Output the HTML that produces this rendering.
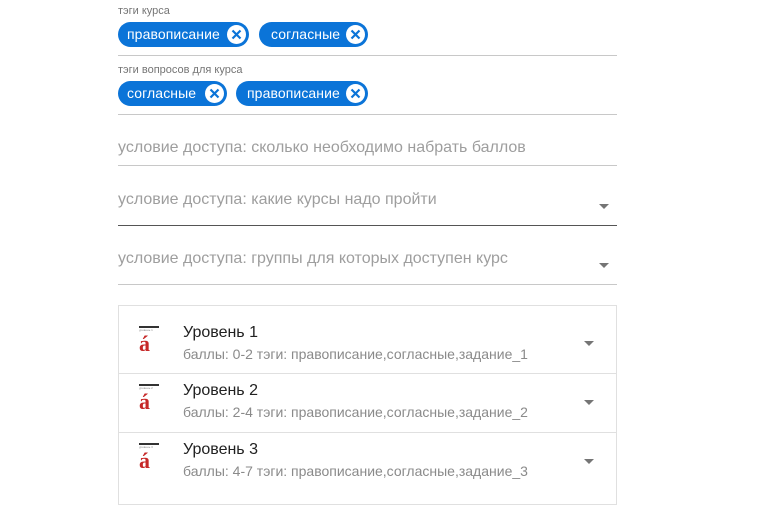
<!DOCTYPE html>
<html><head><meta charset="utf-8"><style>
body{margin:0;width:767px;height:468px;overflow:hidden;background:#fff;font-family:"Liberation Sans",Arial,sans-serif;position:relative}
.a{position:absolute}
.lbl{font-size:11px;color:#757575;left:118px}
.chip{position:absolute;height:25px;border-radius:13px;background:#0b74d8;color:#fff;font-size:14px;line-height:25px;padding-left:9px;box-sizing:border-box;letter-spacing:0.1px}
.x{position:absolute;right:3px;top:3px;width:19px;height:19px;border-radius:50%;background:#fff}
.line{position:absolute;left:118px;width:499px;height:1px;background:#c8c8c8}
.ph{position:absolute;left:118px;font-size:16px;color:#9e9e9e}
.arr{position:absolute;width:0;height:0;border-left:5px solid transparent;border-right:5px solid transparent;border-top:5px solid #757575}
.card{position:absolute;left:118px;top:305px;width:499px;height:200px;border:1px solid #e0e0e0;box-sizing:border-box}
.row{position:absolute;left:0;width:497px;border-bottom:1px solid #e0e0e0}
.t{position:absolute;left:64px;font-size:16px;color:#212121}
.s{position:absolute;left:64px;font-size:14px;color:#8a8a8a}
.ic{position:absolute;left:20px;width:20px}
</style></head><body>
<div class="a lbl" style="top:5px">тэги курса</div>
<div class="chip" style="left:118px;top:22px;width:131px">правописание<svg class="x" viewBox="0 0 19 19"><path d="M5.5 5.5L13.5 13.5M13.5 5.5L5.5 13.5" stroke="#0b74d8" stroke-width="2.2"/></svg></div>
<div class="chip" style="left:259px;top:22px;width:109px;padding-left:12px">согласные<svg class="x" viewBox="0 0 19 19"><path d="M5.5 5.5L13.5 13.5M13.5 5.5L5.5 13.5" stroke="#0b74d8" stroke-width="2.2"/></svg></div>
<div class="line" style="top:55px"></div>
<div class="a lbl" style="top:64px">тэги вопросов для курса</div>
<div class="chip" style="left:118px;top:81px;width:109px;padding-left:9px">согласные<svg class="x" viewBox="0 0 19 19"><path d="M5.5 5.5L13.5 13.5M13.5 5.5L5.5 13.5" stroke="#0b74d8" stroke-width="2.2"/></svg></div>
<div class="chip" style="left:236px;top:81px;width:132px;padding-left:11px">правописание<svg class="x" viewBox="0 0 19 19"><path d="M5.5 5.5L13.5 13.5M13.5 5.5L5.5 13.5" stroke="#0b74d8" stroke-width="2.2"/></svg></div>
<div class="line" style="top:114px"></div>
<div class="ph" style="top:139px">условие доступа: сколько необходимо набрать баллов</div>
<div class="line" style="top:165px"></div>
<div class="ph" style="top:191px">условие доступа: какие курсы надо пройти</div>
<div class="arr" style="left:599px;top:204px"></div>
<div class="line" style="top:225px;background:#555"></div>
<div class="ph" style="top:250px">условие доступа: группы для которых доступен курс</div>
<div class="arr" style="left:599px;top:263px"></div>
<div class="line" style="top:284px"></div>
<div class="card">
 <div class="row" style="top:0;height:67px">
  <div class="ic" style="top:20px"><div style="height:2px;background:#333;width:20px"></div><div style="font-size:3px;color:#888;height:6px">уровень 1</div><div style="font:bold 22px 'Liberation Serif',serif;color:#c62828;line-height:20px">á</div></div>
  <div class="t" style="top:18px">Уровень 1</div><div class="s" style="top:40px">баллы: 0-2 тэги: правописание,согласные,задание_1</div>
  <div class="arr" style="left:465px;top:35px"></div></div>
 <div class="row" style="top:67px;height:59px">
  <div class="ic" style="top:11px"><div style="height:2px;background:#333;width:20px"></div><div style="font-size:3px;color:#888;height:6px">уровень 2</div><div style="font:bold 22px 'Liberation Serif',serif;color:#c62828;line-height:20px">á</div></div>
  <div class="t" style="top:9px">Уровень 2</div><div class="s" style="top:31px">баллы: 2-4 тэги: правописание,согласные,задание_2</div>
  <div class="arr" style="left:465px;top:27px"></div></div>
 <div class="row" style="top:126px;height:70px;border:none">
  <div class="ic" style="top:11px"><div style="height:2px;background:#333;width:20px"></div><div style="font-size:3px;color:#888;height:6px">уровень 3</div><div style="font:bold 22px 'Liberation Serif',serif;color:#c62828;line-height:20px">á</div></div>
  <div class="t" style="top:9px">Уровень 3</div><div class="s" style="top:31px">баллы: 4-7 тэги: правописание,согласные,задание_3</div>
  <div class="arr" style="left:465px;top:27px"></div></div>
</div>
</body></html>
